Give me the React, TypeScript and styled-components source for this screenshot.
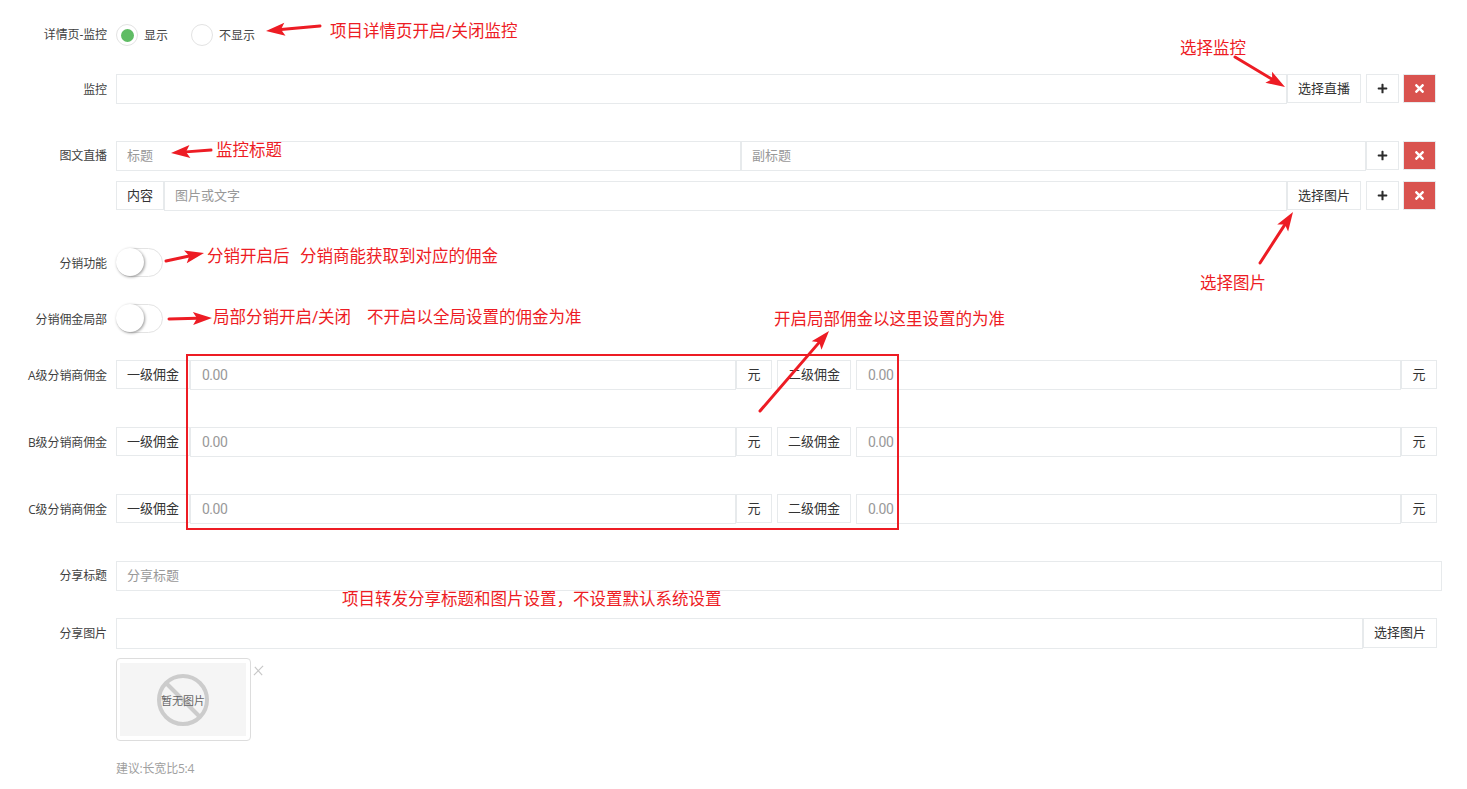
import React from "react";
import styled, { createGlobalStyle } from "styled-components";
import { FaPlus, FaTimes } from "react-icons/fa";

const Global = createGlobalStyle`
  html, body { margin: 0; padding: 0; background: #fff; }
  body { font-family: "Open Sans", "Noto Sans CJK SC", sans-serif; font-size: 12px; color: #333; }
`;

const Page = styled.div`
  position: relative;
  width: 1467px;
  height: 789px;
  overflow: hidden;
  padding-top: 20px;
  box-sizing: border-box;
`;

const Row = styled.div<{ $mt?: number }>`
  display: flex;
  align-items: center;
  height: 30px;
  margin-top: ${(p) => p.$mt ?? 0}px;
`;

const Label = styled.label<{ $dy?: number }>`
  width: 107px;
  margin-right: 9px;
  padding-top: ${(p) => p.$dy ?? 0}px;
  flex: none;
  text-align: right;
  color: #3f3f3f;
  font-size: 12px;
  line-height: 16px;
  letter-spacing: -0.1px;
`;

const Field = styled.input<{ $w?: number; $big?: boolean; $h?: number }>`
  box-sizing: border-box;
  flex: ${(p) => (p.$w ? "none" : "1")};
  width: ${(p) => (p.$w ? `${p.$w}px` : "auto")};
  min-width: 0;
  height: ${(p) => p.$h ?? 30}px;
  border: 1px solid #e7eaec;
  background: #fff;
  outline: none;
  align-self: flex-start;
  padding: 0 ${(p) => (p.$big ? 11 : 10)}px ${(p) => (p.$big ? 0 : 3)}px;
  font-family: ${(p) => (p.$big ? "Roboto," : "")} "Open Sans", "Noto Sans CJK SC", sans-serif;
  font-size: ${(p) => (p.$big ? 14 : 13)}px;
  letter-spacing: ${(p) => (p.$big ? "-0.5px" : "0")};
  color: #333;
  &::placeholder { color: #999; opacity: 1; }
`;

const Addon = styled.span<{ $w: number; $ml?: number; $h?: number }>`
  box-sizing: border-box;
  flex: none;
  align-self: flex-start;
  width: ${(p) => p.$w}px;
  margin-left: ${(p) => p.$ml ?? 0}px;
  height: ${(p) => p.$h ?? 29}px;
  padding-bottom: 3px;
  display: flex;
  align-items: center;
  justify-content: center;
  border: 1px solid #e7eaec;
  background: #fff;
  font-size: 13px;
  color: #333;
`;

const Square = styled.button<{ $danger?: boolean; $ml: number; $w: number }>`
  box-sizing: border-box;
  flex: none;
  align-self: flex-start;
  width: ${(p) => p.$w}px;
  height: 29px;
  margin-left: ${(p) => p.$ml}px;
  padding: 0;
  display: flex;
  align-items: center;
  justify-content: center;
  border: 1px solid #e7eaec;
  background: ${(p) => (p.$danger ? "#d9534f" : "#fff")};
  color: ${(p) => (p.$danger ? "#fff" : "#2b2b2b")};
`;

const RadioItem = styled.span<{ $w: number }>`
  display: flex;
  align-items: center;
  width: ${(p) => p.$w}px;
  color: #444;
`;

const RadioCircle = styled.span<{ $on?: boolean }>`
  box-sizing: border-box;
  width: 22px;
  height: 22px;
  border-radius: 50%;
  border: 1px solid #e3e3e3;
  margin-right: 6px;
  display: flex;
  align-items: center;
  justify-content: center;
  &::after {
    content: "";
    display: ${(p) => (p.$on ? "block" : "none")};
    width: 13px;
    height: 13px;
    border-radius: 50%;
    background: #5fbc64;
  }
`;

const Toggle = styled.span`
  box-sizing: border-box;
  position: relative;
  display: block;
  align-self: flex-start;
  width: 47px;
  height: 29px;
  border: 1px solid #e3e3e3;
  border-radius: 15px;
  background: #fff;
  &::after {
    content: "";
    position: absolute;
    left: -1px;
    top: -1px;
    width: 28px;
    height: 28px;
    border-radius: 50%;
    background: #fff;
    box-shadow: 1px 1px 3px rgba(0, 0, 0, 0.4);
  }
`;

const ThumbRow = styled.div`
  display: flex;
  margin: 10px 0 0 116px;
`;

const Thumb = styled.div`
  box-sizing: border-box;
  width: 135px;
  height: 83px;
  padding: 4px 4px 4px 3px;
  border: 1px solid #ddd;
  border-radius: 4px;
`;

const ThumbInner = styled.div`
  position: relative;
  height: 100%;
  background: #f5f5f5;
  display: flex;
  align-items: center;
  justify-content: center;
`;

const ThumbText = styled.span`
  position: absolute;
  font-size: 11px;
  color: #666;
  white-space: nowrap;
`;

const Close = styled.span`
  margin: 5px 0 0 2px;
  width: 11px;
  height: 11px;
  display: block;
`;

const Hint = styled.div`
  margin: 20px 0 0 116px;
  font-size: 12px;
  line-height: 16px;
  color: #a0a0a0;
  letter-spacing: -0.2px;
`;

const Note = styled.span<{ $x: number; $y: number }>`
  position: absolute;
  left: ${(p) => p.$x}px;
  top: ${(p) => p.$y}px;
  font-size: 16.5px;
  line-height: 22px;
  color: #ed1c24;
  white-space: pre;
  word-spacing: 1px;
`;

const Overlay = styled.svg`
  position: absolute;
  left: 0;
  top: 0;
  pointer-events: none;
`;

const RedFrame = styled.div`
  position: absolute;
  left: 186px;
  top: 354px;
  width: 713px;
  height: 176px;
  box-sizing: border-box;
  border: 2px solid #ed1c24;
  pointer-events: none;
`;

const Arrow = ({ x1, y1, x2, y2 }: { x1: number; y1: number; x2: number; y2: number }) => {
  const a = Math.atan2(y2 - y1, x2 - x1);
  const len = 19;
  const wide = 6.5;
  const bx = x2 - Math.cos(a) * len;
  const by = y2 - Math.sin(a) * len;
  const nx = -Math.sin(a);
  const ny = Math.cos(a);
  const sx = x2 - Math.cos(a) * (len - 4);
  const sy = y2 - Math.sin(a) * (len - 4);
  return (
    <g fill="#ed1c24" stroke="none">
      <line x1={x1} y1={y1} x2={sx} y2={sy} stroke="#ed1c24" strokeWidth="3" strokeLinecap="round" />
      <polygon
        points={`${x2},${y2} ${bx + nx * wide},${by + ny * wide} ${sx},${sy} ${bx - nx * wide},${by - ny * wide}`}
      />
    </g>
  );
};

const Actions = ({ ml = 5 }: { ml?: number }) => (
  <>
    <Square $ml={ml} $w={33}><FaPlus size={11} /></Square>
    <Square $ml={4} $w={33} $danger><FaTimes size={13} /></Square>
  </>
);

const Commission = ({ name, mt }: { name: string; mt: number }) => (
  <Row $mt={mt}>
    <Label $dy={1}>{name}</Label>
    <Addon $w={74}>一级佣金</Addon>
    <Field $w={546} $big placeholder="0.00" />
    <Addon $w={36}>元</Addon>
    <Addon $w={74} $ml={5}>二级佣金</Addon>
    <Field $w={545} $big style={{ marginLeft: 5 }} placeholder="0.00" />
    <Addon $w={36}>元</Addon>
  </Row>
);

export default function App() {
  return (
    <Page>
      <Global />
      <Row>
        <Label>详情页-监控</Label>
        <RadioItem $w={75}><RadioCircle $on />显示</RadioItem>
        <RadioItem $w={80}><RadioCircle />不显示</RadioItem>
      </Row>
      <Row $mt={24}>
        <Label $dy={1}>监控</Label>
        <Field $w={1171} />
        <Addon $w={74}>选择直播</Addon>
        <Actions />
      </Row>
      <Row $mt={37}>
        <Label>图文直播</Label>
        <Field $w={625} placeholder="标题" />
        <Field $w={625} placeholder="副标题" />
        <Actions ml={0} />
      </Row>
      <Row $mt={10}>
        <Label />
        <Addon $w={48}>内容</Addon>
        <Field $w={1123} placeholder="图片或文字" />
        <Addon $w={74}>选择图片</Addon>
        <Actions />
      </Row>
      <Row $mt={37}>
        <Label $dy={1}>分销功能</Label>
        <Toggle />
      </Row>
      <Row $mt={26}>
        <Label $dy={1}>分销佣金局部</Label>
        <Toggle />
      </Row>
      <Commission name="A级分销商佣金" mt={26} />
      <Commission name="B级分销商佣金" mt={37} />
      <Commission name="C级分销商佣金" mt={37} />
      <Row $mt={37}>
        <Label>分享标题</Label>
        <Field $w={1326} placeholder="分享标题" />
      </Row>
      <Row $mt={27}>
        <Label $dy={1}>分享图片</Label>
        <Field $w={1247} $h={31} />
        <Addon $w={74} $h={30}>选择图片</Addon>
      </Row>
      <ThumbRow>
        <Thumb>
          <ThumbInner>
            <svg width="54" height="54" viewBox="0 0 54 54">
              <circle cx="27" cy="27" r="24" fill="none" stroke="#ccc" strokeWidth="4" />
              <path d="M10 10l34 34" stroke="#ccc" strokeWidth="4" />
            </svg>
            <ThumbText>暂无图片</ThumbText>
          </ThumbInner>
        </Thumb>
        <Close>
          <svg width="11" height="11" viewBox="0 0 12 12">
            <path d="M1 11L11 1M2 2l8 9" stroke="#c8c8c8" strokeWidth="1.3" fill="none" />
          </svg>
        </Close>
      </ThumbRow>
      <Hint>建议:长宽比5:4</Hint>

      <RedFrame />
      <Overlay width="1467" height="789" viewBox="0 0 1467 789">
        <Arrow x1={320} y1={26} x2={266} y2={31} />
        <Arrow x1={1235} y1={57} x2={1285} y2={87} />
        <Arrow x1={211} y1={150} x2={171} y2={153} />
        <Arrow x1={1260} y1={263} x2={1293} y2={212} />
        <Arrow x1={166} y1={261} x2={204} y2={253} />
        <Arrow x1={169} y1={319} x2={212} y2={318} />
        <Arrow x1={760} y1={411} x2={829} y2={331} />
      </Overlay>
      <Note $x={330} $y={20}>项目详情页开启/关闭监控</Note>
      <Note $x={1180} $y={37}>选择监控</Note>
      <Note $x={216} $y={139}>监控标题</Note>
      <Note $x={207} $y={245}>分销开启后  分销商能获取到对应的佣金</Note>
      <Note $x={1200} $y={272}>选择图片</Note>
      <Note $x={213} $y={306}>局部分销开启/关闭   不开启以全局设置的佣金为准</Note>
      <Note $x={774} $y={308}>开启局部佣金以这里设置的为准</Note>
      <Note $x={342} $y={588}>项目转发分享标题和图片设置，不设置默认系统设置</Note>
    </Page>
  );
}
